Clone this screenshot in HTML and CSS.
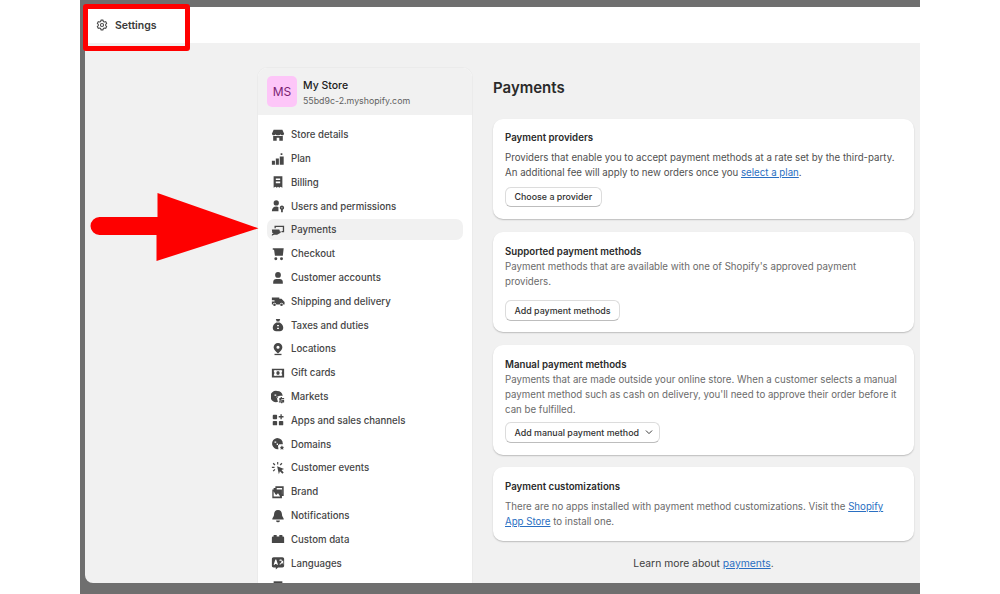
FILE: index.html
```html
<!DOCTYPE html>
<html lang="en">
<head>
<meta charset="utf-8">
<title>Settings - Payments</title>
<link rel="stylesheet" href="styles.css">
</head>
<body>
<div class="frame">
  <div class="app">
    <header class="topbar">
      <svg class="gear" viewBox="0 0 16 16"><path d="M6.6 1.5h2.8l.4 1.9 1.3.7 1.8-.6 1.4 2.4-1.4 1.3v1.6l1.4 1.3-1.4 2.4-1.8-.6-1.3.7-.4 1.9H6.6l-.4-1.9-1.3-.7-1.8.6-1.4-2.4 1.4-1.3V7.2L1.7 5.9l1.4-2.4 1.8.6 1.3-.7z" fill="none" stroke="#4a4a4a" stroke-width="1.4" stroke-linejoin="round"/><circle cx="8" cy="8" r="2.1" fill="none" stroke="#4a4a4a" stroke-width="1.4"/></svg>
      <span class="topbar-title">Settings</span>
    </header>
    <main class="main">
      <aside class="sidebar">
        <div class="store">
          <div class="avatar">MS</div>
          <div class="store-info">
            <div class="store-name">My Store</div>
            <div class="store-url">55bd9c-2.myshopify.com</div>
          </div>
        </div>
        <nav class="nav">
          <a class="nav-item"><svg class="ico" viewBox="0 0 16 16"><path d="M3 2h10l2 4.500c0 1-1 1.700-2 1.700s-1.700-.6-2-1.200c-.4.6-1.200 1.200-3 1.200s-2.600-.6-3-1.200c-.3.6-1 1.200-2 1.200S1 7.500 1 6.500z"/><path d="M2.500 9h11v5.500H9.500V11h-3v3.500h-4z"/></svg>Store details</a>
          <a class="nav-item"><svg class="ico" viewBox="0 0 16 16"><path d="M11 1.500h2v2h-2zM1 10h3.500v4.500H1zM5.500 7.500H9V14.500H5.500zM10 5h4.500v9.500H10z"/></svg>Plan</a>
          <a class="nav-item"><svg class="ico" viewBox="0 0 16 16"><path fill-rule="evenodd" d="M3 1.500h10v13l-2-1.200-1.500 1.200L8 13.300l-1.500 1.200L5 13.300l-2 1.200zM5.500 4v1.800h5V4zm0 3.500v1.800h5V7.500z"/></svg>Billing</a>
          <a class="nav-item"><svg class="ico" viewBox="0 0 16 16"><circle cx="6" cy="4.500" r="3"/><path d="M1 14c0-3.500 2-5.500 5-5.500 1 0 1.800.2 2.500.6V14z"/><path fill-rule="evenodd" d="M12.500 7.500a2.500 2.500 0 0 1 1 4.800V15h-2v-2.700a2.500 2.500 0 0 1 1-4.800zm0 1.800a.7.7 0 1 0 0 1.400.7.7 0 0 0 0-1.400z"/></svg>Users and permissions</a>
          <a class="nav-item active"><svg class="ico" viewBox="0 0 16 16"><path fill-rule="evenodd" d="M4 3h11v7.500h-3V9.200h1.500V4.500h-8V6H4z"/><path d="M1 7.500h7.500c1 0 1.500.6 1.500 1.300s-.5 1.200-1.500 1.200H7l4-.5v1.500l-4 2.500H3.500L1 14.500V13l2-1.500H1.500z"/></svg>Payments</a>
          <a class="nav-item"><svg class="ico" viewBox="0 0 16 16"><path d="M2 1.500h12.500l-1 8.500H4.500L3.500 3H2z"/><circle cx="5.500" cy="13.300" r="1.700"/><circle cx="12" cy="13.300" r="1.700"/></svg>Checkout</a>
          <a class="nav-item"><svg class="ico" viewBox="0 0 16 16"><circle cx="8" cy="4.500" r="3.300"/><path d="M2.500 14.500v-2c0-2 1.500-3.300 3.500-3.300h4c2 0 3.500 1.300 3.500 3.300v2z"/></svg>Customer accounts</a>
          <a class="nav-item"><svg class="ico" viewBox="0 0 16 16"><path d="M1 4h8.500v1.500h2.500L15.500 9v3H14a2 2 0 0 0-4 0H6a2 2 0 0 0-4 0H1V8.500h3V7H1z"/><circle cx="4" cy="12.300" r="1.500"/><circle cx="12" cy="12.300" r="1.500"/></svg>Shipping and delivery</a>
          <a class="nav-item"><svg class="ico" viewBox="0 0 16 16"><path d="M5.500 1h5L9.500 4h-3z"/><path fill-rule="evenodd" d="M6 5h4c3 1.500 4 4 4 6 0 2.500-1.500 4-4 4H6c-2.500 0-4-1.500-4-4 0-2 1-4.500 4-6zm1 3v1.500h2V8zm0 3v1.500h2V11z"/></svg>Taxes and duties</a>
          <a class="nav-item"><svg class="ico" viewBox="0 0 16 16"><path fill-rule="evenodd" d="M8 1a5 5 0 0 1 5 5c0 2.500-2.500 5-5 7-2.500-2-5-4.500-5-7a5 5 0 0 1 5-5zm0 3.200a1.800 1.800 0 1 0 0 3.600 1.800 1.800 0 0 0 0-3.600z"/><path d="M4 13.500h8V15H4z"/></svg>Locations</a>
          <a class="nav-item"><svg class="ico" viewBox="0 0 16 16"><path fill-rule="evenodd" d="M1 3h14v10H1zm5 1.800L4.500 4.500 3 5.500 4 8 3 10.500l1.500 1 1.500-.3h4l1.500.3 1.500-1L12 8l1-2.500-1.500-1-1.500.3zm.8 1.200h2.400L10 8l-.8 2H6.800L6 8z"/></svg>Gift cards</a>
          <a class="nav-item"><svg class="ico" viewBox="0 0 16 16"><path fill-rule="evenodd" d="M7 1a6.500 6.500 0 0 1 6.400 5.500H10.500c-2.200 0-3.500 1.300-3.500 3 0 2 1 3.500 1 4A6.500 6.500 0 1 1 7 1zM4 5v1.500h2V5zm2.500 2.500v1.500h1.500V7.500z"/><path d="M11 8h1.500v1H15v1.300h-3.200v.7H15v3.200h-2v1h-1.500v-1H9v-1.300h4v-.7H9.500V9H11z"/></svg>Markets</a>
          <a class="nav-item"><svg class="ico" viewBox="0 0 16 16"><rect x="2" y="2" width="5" height="5" rx="1"/><rect x="2" y="9" width="5" height="5" rx="1"/><rect x="9" y="9" width="5" height="5" rx="1"/><path d="M10.800 1.500h1.500v2h2V5h-2v2h-1.500V5h-2V3.500h2z"/></svg>Apps and sales channels</a>
          <a class="nav-item"><svg class="ico" viewBox="0 0 16 16"><path fill-rule="evenodd" d="M7 1a6.500 6.500 0 0 1 6.500 6.500v.7H9.500L8 10l.5 4a6.500 6.500 0 1 1-1.500-13zM4 5v1.500h2V5zm2.500 2.500v1.500h1.500V7.500z"/><path d="M12.500 9.500l.8 1.700 1.700.3-1.200 1.200.3 1.800-1.600-.8-1.600.8.300-1.800-1.200-1.200 1.700-.3z"/></svg>Domains</a>
          <a class="nav-item"><svg class="ico" viewBox="0 0 16 16"><path d="M7 6l8 3-3 1.200L14.500 13l-1.500 1.500-2.800-2.800L9 15z"/><path d="M7 1h1.300v3H7zM2 3l1-1 2 2-1 1zM1 8V6.700h3V8zM12 2l1 1-2 2-1-1zM3 12l-1-1 2-2 1 1z"/></svg>Customer events</a>
          <a class="nav-item"><svg class="ico" viewBox="0 0 16 16"><path fill-rule="evenodd" d="M5 1.500h9.500v11h-2V15h-11V5H3V3.500h2zM3 7v6h7.500L8 9.500 6 11.500 5 10.500zM6.500 3.500V5h6v5.500h.2V3.500z"/></svg>Brand</a>
          <a class="nav-item"><svg class="ico" viewBox="0 0 16 16"><path d="M8 1c3 0 4.500 2.200 4.500 5 0 2.500 1.500 3.500 2 5v1H1.500v-1c.5-1.500 2-2.500 2-5 0-2.800 1.500-5 4.500-5z"/><path d="M5.800 13h4.400a2.200 2.200 0 0 1-4.400 0z"/></svg>Notifications</a>
          <a class="nav-item"><svg class="ico" viewBox="0 0 16 16"><path d="M1 6.500c0-.8.5-1.500 1.300-1.500H3V3.500h3.500V5h3V3.500H13V5h.7c.8 0 1.300.7 1.300 1.500v6H1z"/></svg>Custom data</a>
          <a class="nav-item"><svg class="ico" viewBox="0 0 16 16"><path fill-rule="evenodd" d="M3 1.500h10c1.200 0 2 .8 2 2V11c0 1.200-.8 2-2 2H8l-2.500 2.500V13H3c-1.200 0-2-.8-2-2V3.500c0-1.200.8-2 2-2zM5 4 3 10h1.400l.3-1h1.600l.3 1H8L6 4zm5 0-.5 1.300h2.700C12 7 11 8.200 9.500 9l.8 1c1.200-.7 2-1.500 2.600-2.400.5.900.7 1.600 1.100 2.400V5.300H12.500L12 4z"/></svg>Languages</a>
          <a class="nav-item"><svg class="ico" viewBox="0 0 16 16"><path d="M3 1.500h10v13H3z"/></svg></a>
        </nav>
      </aside>
      <section class="content">
        <h1 class="page-title">Payments</h1>
        <div class="card card-providers">
          <h2 class="card-title">Payment providers</h2>
          <p class="card-text dark">Providers that enable you to accept payment methods at a rate set by the third-party. An additional fee will apply to new orders once you <a class="link">select a plan</a>.</p>
          <button class="btn">Choose a provider</button>
        </div>
        <div class="card card-supported">
          <h2 class="card-title">Supported payment methods</h2>
          <p class="card-text">Payment methods that are available with one of Shopify's approved payment providers.</p>
          <button class="btn">Add payment methods</button>
        </div>
        <div class="card card-manual">
          <h2 class="card-title">Manual payment methods</h2>
          <p class="card-text">Payments that are made outside your online store. When a customer selects a manual payment method such as cash on delivery, you'll need to approve their order before it can be fulfilled.</p>
          <button class="btn btn-menu">Add manual payment method<svg class="chev" viewBox="0 0 10 10"><path d="M1.500 3.500 5 7l3.500-3.500" fill="none" stroke="#333" stroke-width="1.200" stroke-linecap="round" stroke-linejoin="round"/></svg></button>
        </div>
        <div class="card card-custom">
          <h2 class="card-title">Payment customizations</h2>
          <p class="card-text">There are no apps installed with payment method customizations. Visit the <a class="link">Shopify App Store</a> to install one.</p>
        </div>
        <p class="learn">Learn more about <a class="link">payments</a>.</p>
      </section>
    </main>
  </div>
</div>
<div class="callout-box"></div>
<svg class="callout-arrow" viewBox="0 0 170 68"><path d="M9.500 24H67.500V0L168.500 35.300 66.500 68V42H9.500a9 9 0 0 1 0-18z" fill="#fe0000"/></svg>
</body>
</html>
```
FILE: styles.css
```css
* { box-sizing: border-box; }
html, body { margin: 0; height: 594px; overflow: hidden; background: #fff; }
body { position: relative; font-family: Inter, "Liberation Sans", sans-serif; color: #303030; }
.frame { width: 840px; height: 594px; margin-left: 80px; padding: 7px 0 11px 5px; background: #6f6f6f; }
.app { height: 576px; background: #f1f1f1; border-radius: 0 0 0 8px; overflow: hidden; }
.topbar { height: 36px; display: flex; align-items: center; gap: 7px; padding: 0 0 0 11px; background: #fff; }
.gear { width: 12px; height: 12px; }
.topbar-title { font-size: 10.500px; font-weight: 600; color: #3a3a3a; }
.main { display: flex; height: 540px; padding: 24px 0 0 172px; }
.sidebar { width: 216px; flex: none; height: 540px; background: #fff; border: 1px solid #ebebeb; border-bottom: 0; border-radius: 10px 10px 0 0; overflow: hidden; }
.store { height: 47px; display: flex; align-items: center; gap: 6px; padding: 0 9px; background: #f1f1f1; }
.avatar { width: 30px; height: 31px; display: flex; align-items: center; justify-content: center; border-radius: 5px; background: #fdc6f8; color: #7a1f73; font-size: 12px; }
.store-info { padding-top: 2px; }
.store-name { font-size: 10.500px; font-weight: 500; line-height: 15px; color: #202020; }
.store-url { font-size: 8.800px; line-height: 15px; color: #616161; }
.nav { display: flex; flex-direction: column; gap: 2.800px; padding: 9.300px 9px 0; }
.nav-item { flex: none; height: 21px; display: flex; align-items: center; gap: 6px; padding: 0 0 0 4px; border-radius: 7px; font-size: 9.650px; font-weight: 500; color: #454545; }
.nav-item.active { background: #f1f1f1; }
.ico { width: 14px; height: 14px; flex: none; fill: #474747; }
.content { width: 421px; margin-left: 20px; flex: none; }
.page-title { margin: 0 0 17px; padding-top: 5.500px; height: 35px; font-size: 15px; font-weight: 600; line-height: 30px; color: #2a2a2a; }
.card { margin-bottom: 13px; padding: 12px 12px 12px; background: #fff; border-radius: 10px; box-shadow: 0 1px 1.500px rgba(0, 0, 0, .22); }
.card-title { margin: 0; font-size: 9.700px; font-weight: 600; line-height: 15px; color: #2a2a2a; }
.card-text { margin: 0; font-size: 9.700px; line-height: 15px; color: #6b6b6b; }
.card-text.dark { color: #505050; }
.card-providers { height: 100px; padding-top: 11px; }
.card-providers .card-text { margin: 5px 0 6.500px; }
.card-supported { height: 100px; }
.card-supported .card-text { margin-bottom: 11px; }
.card-manual { height: 110px; margin-bottom: 12px; }
.card-manual .card-text { margin-bottom: 5px; }
.card-custom { height: 74px; }
.card-custom .card-text { margin-top: 5px; }
.btn { width: fit-content; height: 20.500px; display: flex; align-items: center; gap: 5px; padding: 0 8.500px; background: #fff; border: 1px solid #dcdcdc; border-bottom-color: #bdbdbd; border-radius: 6px; font: 500 8.900px Inter, "Liberation Sans", sans-serif; color: #303030; }
.btn-menu { gap: 5.500px; padding-right: 6px; }
.chev { width: 8px; height: 8px; }
.link { color: #2a6fc2; text-decoration: underline; }
.learn { margin: 15px 0 0; font-size: 10.350px; line-height: 15px; text-align: center; color: #404040; }
.callout-box { position: absolute; left: 83px; top: 4px; width: 107px; height: 47px; border: 5px solid #f00; border-radius: 3px; }
.callout-arrow { position: absolute; left: 90px; top: 193px; width: 170px; height: 68px; }
```
